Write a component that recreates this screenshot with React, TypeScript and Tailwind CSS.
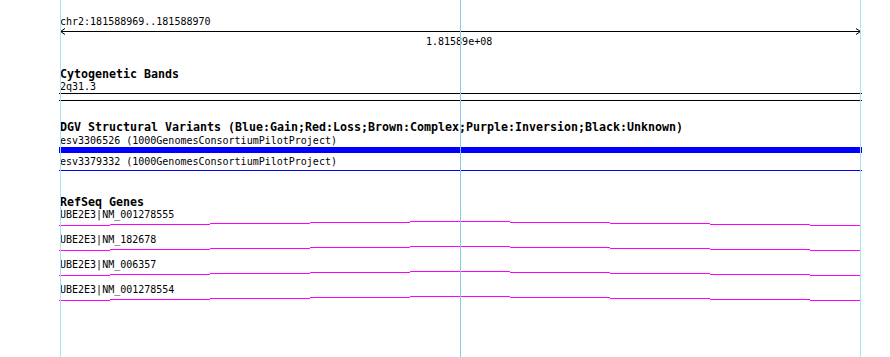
import React from "react";

const segs: [number, number, number][] = [
  [59, 110, 5],
  [110, 210, 4],
  [210, 310, 3],
  [310, 410, 2],
  [410, 510, 1],
  [510, 610, 2],
  [610, 710, 3],
  [710, 810, 4],
  [810, 861, 5],
];

function GeneLine() {
  return (
    <svg width={803} height={14} className="block" shapeRendering="crispEdges">
      {segs.map(([a, b, y]) => (
        <rect key={a} x={a - 59} y={y} width={b - a} height={1} fill="#ff00ff" />
      ))}
    </svg>
  );
}

const genes = ["UBE2E3|NM_001278555", "UBE2E3|NM_182678", "UBE2E3|NM_006357", "UBE2E3|NM_001278554"];

export default function App() {
  return (
    <div className="relative w-[890px] h-[357px] overflow-hidden bg-white text-black font-['DejaVu_Sans_Mono',monospace]">
      <div className="w-[803px] ml-[59px]">
        <div className="pt-[15px] h-[28px] leading-[13px] text-[10px] pl-px whitespace-pre">chr2:181588969..181588970</div>
        <svg width={803} height={7} className="block" shapeRendering="crispEdges">
          <line x1={1} y1={3.5} x2={802} y2={3.5} stroke="#000" strokeWidth={1} />
          <polyline points="6,0.5 1.5,3.5 6,6.5" fill="none" stroke="#000" strokeWidth={1} shapeRendering="auto" />
          <polyline points="797,0.5 801.5,3.5 797,6.5" fill="none" stroke="#000" strokeWidth={1} shapeRendering="auto" />
          <line x1={401.5} y1={0} x2={401.5} y2={7} stroke="#000" strokeWidth={1} />
        </svg>
        <div className="h-[13px] leading-[13px] text-[10px] pl-[367px] whitespace-pre">1.81589e+08</div>

        <div className="mt-[19px] h-[14px] leading-[14px] text-[11.63px] font-bold pl-px whitespace-pre">Cytogenetic Bands</div>
        <div className="h-[12px] leading-[11px] text-[10px] pl-px whitespace-pre">2q31.3</div>
        <div className="h-[8px] border-y border-black" />

        <div className="mt-[19px] h-[14px] leading-[14px] text-[11.63px] font-bold pl-px whitespace-pre">
          DGV Structural Variants (Blue:Gain;Red:Loss;Brown:Complex;Purple:Inversion;Black:Unknown)
        </div>
        <div className="mt-px h-[11px] leading-[11px] text-[10px] pl-px whitespace-pre">esv3306526 (1000GenomesConsortiumPilotProject)</div>
        <div className="mt-px h-[6px] bg-[#0000ff]" />
        <div className="mt-[3px] h-[11px] leading-[11px] text-[10px] pl-px whitespace-pre">esv3379332 (1000GenomesConsortiumPilotProject)</div>
        <div className="mt-[3px] h-px bg-[#0000ff]" />

        <div className="mt-[24px] h-[14px] leading-[14px] text-[11.63px] font-bold pl-px whitespace-pre">RefSeq Genes</div>
        {genes.map((g) => (
          <div key={g}>
            <div className="h-[11px] leading-[11px] text-[10px] pl-px whitespace-pre">{g}</div>
            <GeneLine />
          </div>
        ))}
      </div>

      <div className="absolute top-0 left-[60px] w-px h-full bg-[#a6e4f0]" />
      <div className="absolute top-0 left-[460px] w-px h-full bg-[#86cdea]" />
      <div className="absolute top-0 left-[860px] w-px h-full bg-[#a6e4f0]" />
    </div>
  );
}
